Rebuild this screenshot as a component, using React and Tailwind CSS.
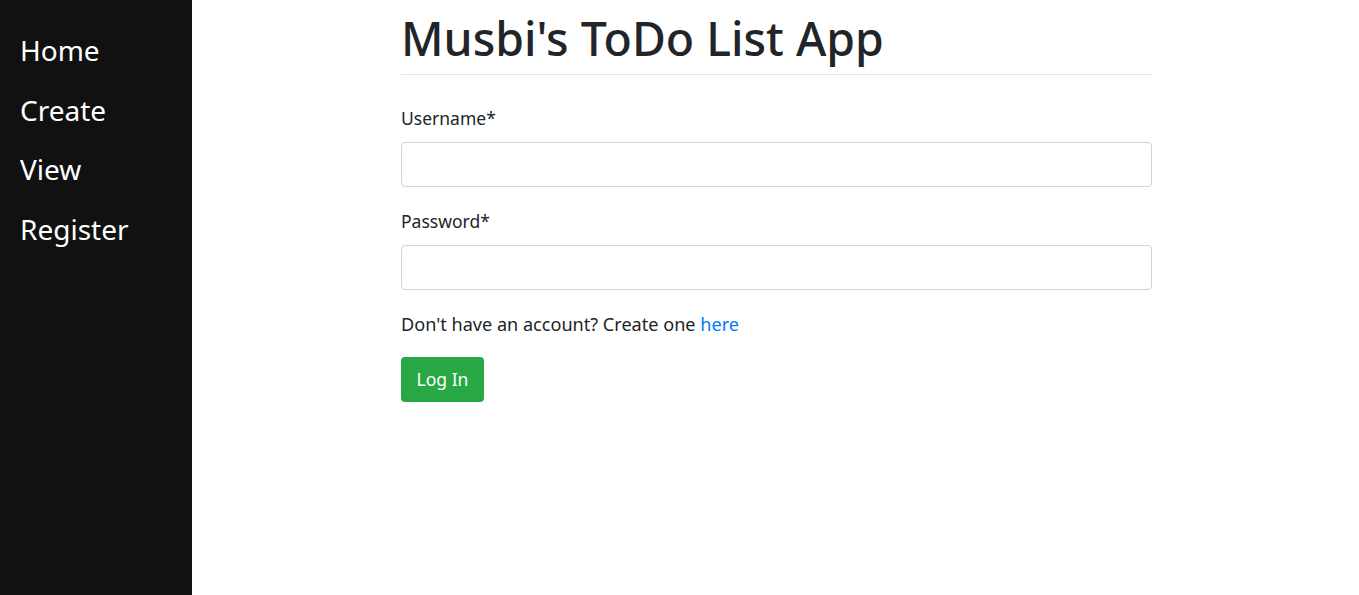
export default function App() {
    const links = ["Home", "Create", "View", "Register"];

    return (
        <div className="flex h-[595px] w-full bg-white text-[#212529]" style={{ fontFamily: '"Noto Sans", "Open Sans", sans-serif' }}>
            {/* Sidebar */}
            <nav className="w-[192px] h-full bg-[#111111] pt-[21px] shrink-0">
                {links.map((l) => (
                    <a key={l} href="#" className="block pl-[20px] text-[28px] leading-[59.5px] text-white">
                        {l}
                    </a>
                ))}
            </nav>

            {/* Main */}
            <main className="flex-1 pl-[2px]">
                <div className="w-[751px] mx-auto">
                    <h1 className="text-[46.4px] font-medium leading-[56px] pt-[10px] pb-[8px] border-b border-[#e5e5e5]">
                        Musbi's ToDo List App
                    </h1>

                    <form className="pt-[29px]">
                        <label className="block text-[17.5px] leading-[28px] mb-[10px]">Username*</label>
                        <input className="block w-full h-[45px] border border-[#ced4da] rounded-[4px] px-3" />

                        <label className="block text-[17.5px] leading-[28px] mt-[20px] mb-[10px]">Password*</label>
                        <input type="password" className="block w-full h-[45px] border border-[#ced4da] rounded-[4px] px-3" />

                        <p className="text-[18.1px] leading-[28px] mt-[20px]">
                            Don't have an account? Create one <a href="#" className="text-[#007bff]">here</a>
                        </p>

                        <button type="button" className="mt-[19px] w-[83px] h-[45px] bg-[#28a745] text-white text-[17.5px] rounded-[4px]">
                            Log In
                        </button>
                    </form>
                </div>
            </main>
        </div>
    );
}
